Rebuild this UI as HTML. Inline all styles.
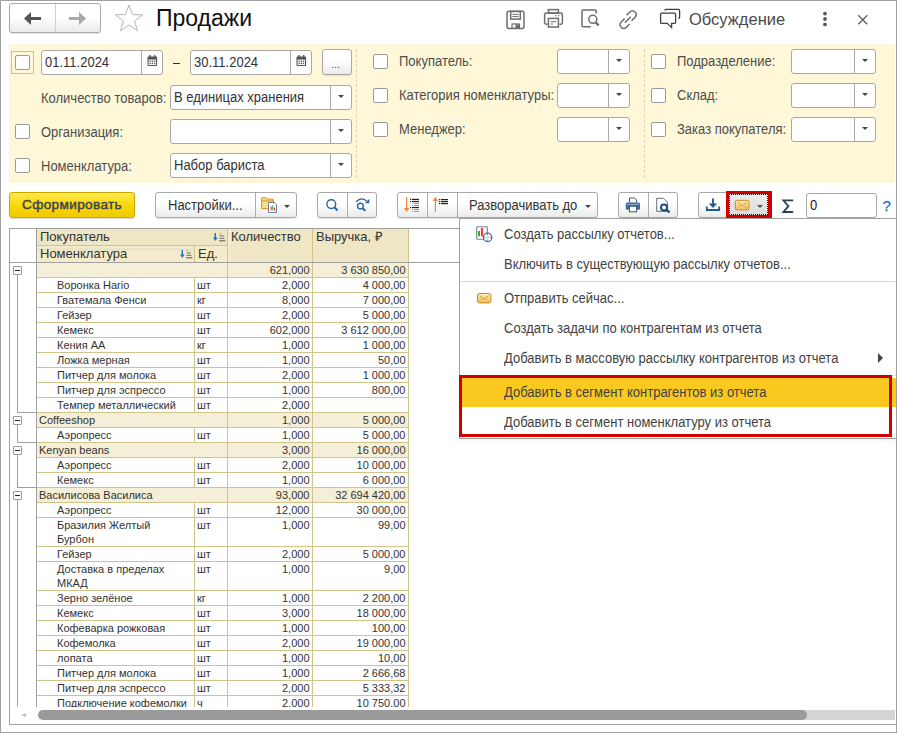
<!DOCTYPE html>
<html><head><meta charset="utf-8">
<style>
*{box-sizing:border-box}
html,body{margin:0;padding:0}
body{width:897px;height:733px;overflow:hidden;position:relative;background:#fff;font-family:"Liberation Sans",sans-serif;color:#333}
.a{position:absolute}
.frame{left:0;top:0;width:897px;height:733px;border:1px solid #a0a0a0}
.t13{font-size:13px;line-height:15px;white-space:nowrap;transform:scaleY(1.07);transform-origin:0 12px}
.t11{font-size:11px;line-height:13px;white-space:nowrap}
.btn{border:1px solid #a9a9a9;border-radius:3px;background:linear-gradient(#fff 0%,#fff 45%,#ebebeb 100%);box-shadow:0 1px 1px rgba(0,0,0,.10)}
.inp{border:1px solid #a8a8a8;border-radius:3px;background:#fff}
.dv{width:1px;background:#c8c8c8}
.cb{width:15px;height:15px;border:1px solid #9a9a9a;border-radius:2px;background:#fff}
.dd{width:0;height:0;border-left:3px solid transparent;border-right:3px solid transparent;border-top:3px solid #444}
.lbl{color:#4d4d4d}
</style></head><body>

<!-- HEADER -->
<div class="a btn" style="left:9px;top:3px;width:92px;height:30px;"></div>
<div class="a" style="left:55px;top:4px;width:1px;height:28px;background:#d0d0d0"></div>
<svg class="a" style="left:20px;top:8px" width="26" height="20" viewBox="0 0 26 20">
  <path d="M4 10.5 L11 4 L11 17 Z" fill="#555"/><rect x="10" y="9" width="11" height="3" fill="#555"/>
</svg>
<svg class="a" style="left:65px;top:8px" width="26" height="20" viewBox="0 0 26 20">
  <path d="M21 10.5 L14 4 L14 17 Z" fill="#a8a8a8"/><rect x="4" y="9" width="11" height="3" fill="#a8a8a8"/>
</svg>
<svg class="a" style="left:113px;top:3px" width="32" height="30" viewBox="0 0 32 30">
  <path d="M16 2 L19.6 11.6 L29.6 11.8 L21.6 18 L24.5 27.8 L16 22 L7.5 27.8 L10.4 18 L2.4 11.8 L12.4 11.6 Z" fill="none" stroke="#b3b7bb" stroke-width="1"/>
</svg>
<div class="a" style="left:156px;top:5px;font-size:23px;line-height:26px;color:#111;white-space:nowrap">Продажи</div>
<!-- header icons -->
<svg class="a" style="left:500px;top:4px" width="200" height="30" viewBox="500 4 200 30" fill="none" stroke="#6e6e6e" stroke-width="1.5">
  <!-- save -->
  <path d="M507 13 Q507 11.2 508.8 11.2 L522 11.2 Q524 11.2 524 13.2 L524 26.6 Q524 28.4 522.2 28.4 L508.8 28.4 Q507 28.4 507 26.6 Z"/>
  <rect x="510.7" y="11.5" width="9.6" height="7.6"/>
  <path d="M512.3 14.4 H518.5 M512.3 16.6 H518.5" stroke-width="1"/>
  <rect x="512" y="24" width="7.5" height="4.4" stroke-width="1.2"/>
  <rect x="515.5" y="24.4" width="4" height="4" fill="#6e6e6e" stroke="none"/>
  <!-- print -->
  <rect x="548.4" y="9.6" width="10" height="3.6"/>
  <path d="M547.5 24.2 H546.2 Q544.6 24.2 544.6 22.6 V14.6 Q544.6 13 546.2 13 H560.8 Q562.4 13 562.4 14.6 V22.6 Q562.4 24.2 560.8 24.2 H559.5"/>
  <rect x="548.4" y="18.4" width="10" height="8.6"/>
  <path d="M555 15.8 H556.6 M558 15.8 H559.6" stroke-width="1.1"/>
  <path d="M550.6 21.7 H556.4 M550.6 24 H553" stroke-width="1"/>
  <!-- preview -->
  <path d="M596.2 13.6 V10.8 Q596.2 10 595.4 10 H583 Q582 10 582 11 V25.8 Q582 26.8 583 26.8 H590.8"/>
  <circle cx="592.8" cy="19.3" r="4"/>
  <path d="M595.6 22.2 L598.6 25.4" stroke-width="2.4"/>
  <!-- link -->
  <path d="M624.6 18.6 L621.2 22 Q618.6 24.6 621.2 27.2 Q623.8 29.8 626.4 27.2 L629.6 24"/>
  <path d="M626.6 15.2 L629.8 12 Q632.4 9.4 635 12 Q637.6 14.6 635 17.2 L631.6 20.6"/>
  <path d="M624.8 22.8 L630.8 16.8"/>
</svg>
<svg class="a" style="left:654px;top:4px" width="36" height="30" viewBox="654 4 36 30" fill="none" stroke="#3f3f3f" stroke-width="1.3">
  <path d="M664.6 10.5 Q665.4 9.3 666.6 9.3 H678.2 Q679.6 9.3 679.6 10.7 V17 Q679.6 18.3 678.4 18.5"/>
  <path d="M661.8 13.2 H674.4 Q675.6 13.2 675.6 14.4 V22.2 Q675.6 23.4 674.4 23.4 H671.6 V27.6 L667.2 23.4 H661.8 Q660.6 23.4 660.6 22.2 V14.4 Q660.6 13.2 661.8 13.2 Z"/>
</svg>
<div class="a" style="left:689px;top:10px;font-size:16.5px;line-height:18px;color:#4a4a4a;white-space:nowrap">Обсуждение</div>
<svg class="a" style="left:818px;top:8px" width="14" height="22" viewBox="818 8 14 22" fill="#5a5a5a">
  <circle cx="825" cy="13.6" r="1.9"/><circle cx="825" cy="19" r="1.9"/><circle cx="825" cy="24.4" r="1.9"/>
</svg>
<svg class="a" style="left:854px;top:11px" width="18" height="18" viewBox="854 11 18 18" stroke="#5a5a5a" stroke-width="1.25">
  <path d="M858.3 15.3 L867.3 24.3 M867.3 15.3 L858.3 24.3"/>
</svg>

<div class="a" style="left:9px;top:44px;width:886px;height:139px;background:#fef8d9"></div>
<div class="a" style="left:11px;top:51px;width:23px;height:23px;border:1px solid #f2c230"></div><div class="a cb" style="left:15px;top:55px"></div>
<div class="a inp" style="left:41px;top:50px;width:122px;height:25px"></div><div class="a" style="left:141px;top:51px;width:1px;height:23px;background:#a8a8a8"></div><svg class="a" style="left:147px;top:55px" width="11" height="12" viewBox="0 0 11 12">
<rect x="0.5" y="1.5" width="9.6" height="9.6" rx="1" fill="#555"/><rect x="1.6" y="4.6" width="7.4" height="5.4" fill="#fff"/>
<rect x="2.3" y="0" width="1.4" height="2.4" fill="#555"/><rect x="7" y="0" width="1.4" height="2.4" fill="#555"/>
<g fill="#555"><rect x="2.5" y="5.6" width="1.3" height="1.3"/><rect x="4.7" y="5.6" width="1.3" height="1.3"/><rect x="6.9" y="5.6" width="1.3" height="1.3"/>
<rect x="2.5" y="7.8" width="1.3" height="1.3"/><rect x="4.7" y="7.8" width="1.3" height="1.3"/><rect x="6.9" y="7.8" width="1.3" height="1.3"/></g></svg><div class="a t13" style="left:45px;top:54.5px;color:#333">01.11.2024</div>
<div class="a" style="left:173px;top:63px;width:7px;height:1.3px;background:#333"></div>
<div class="a inp" style="left:190px;top:50px;width:122px;height:25px"></div><div class="a" style="left:290px;top:51px;width:1px;height:23px;background:#a8a8a8"></div><svg class="a" style="left:296px;top:55px" width="11" height="12" viewBox="0 0 11 12">
<rect x="0.5" y="1.5" width="9.6" height="9.6" rx="1" fill="#555"/><rect x="1.6" y="4.6" width="7.4" height="5.4" fill="#fff"/>
<rect x="2.3" y="0" width="1.4" height="2.4" fill="#555"/><rect x="7" y="0" width="1.4" height="2.4" fill="#555"/>
<g fill="#555"><rect x="2.5" y="5.6" width="1.3" height="1.3"/><rect x="4.7" y="5.6" width="1.3" height="1.3"/><rect x="6.9" y="5.6" width="1.3" height="1.3"/>
<rect x="2.5" y="7.8" width="1.3" height="1.3"/><rect x="4.7" y="7.8" width="1.3" height="1.3"/><rect x="6.9" y="7.8" width="1.3" height="1.3"/></g></svg><div class="a t13" style="left:194px;top:54.5px;color:#333">30.11.2024</div>
<div class="a btn" style="left:322px;top:49px;width:30px;height:26px"></div>
<div class="a" style="left:331px;top:58px;font-size:11px;line-height:13px;color:#555">...</div>
<div class="a" style="left:356px;top:49px;width:0;height:129px;border-left:1px dashed #d9d2b4"></div>
<div class="a" style="left:644px;top:49px;width:0;height:129px;border-left:1px dashed #d9d2b4"></div>
<div class="a t13 lbl" style="left:41px;top:90.6px">Количество товаров:</div>
<div class="a inp" style="left:170px;top:85px;width:182px;height:25px"></div><div class="a" style="left:330px;top:86px;width:1px;height:23px;background:#a8a8a8"></div><div class="a dd" style="left:338.0px;top:95px"></div><div class="a t13" style="left:174px;top:89.5px;color:#333">В единицах хранения</div>
<div class="a cb" style="left:15px;top:124px"></div>
<div class="a t13 lbl" style="left:41px;top:124.6px">Организация:</div>
<div class="a inp" style="left:170px;top:119px;width:182px;height:25px"></div><div class="a" style="left:330px;top:120px;width:1px;height:23px;background:#a8a8a8"></div><div class="a dd" style="left:338.0px;top:129px"></div>
<div class="a cb" style="left:15px;top:158px"></div>
<div class="a t13 lbl" style="left:41px;top:158.6px">Номенклатура:</div>
<div class="a inp" style="left:170px;top:153px;width:182px;height:25px"></div><div class="a" style="left:330px;top:154px;width:1px;height:23px;background:#a8a8a8"></div><div class="a dd" style="left:338.0px;top:163px"></div><div class="a t13" style="left:174px;top:157.5px;color:#333">Набор бариста</div>
<div class="a cb" style="left:373px;top:54px"></div>
<div class="a t13 lbl" style="left:399px;top:53.6px">Покупатель:</div>
<div class="a inp" style="left:557px;top:49px;width:73px;height:25px"></div><div class="a" style="left:608px;top:50px;width:1px;height:23px;background:#a8a8a8"></div><div class="a dd" style="left:616.0px;top:59px"></div>
<div class="a cb" style="left:373px;top:88px"></div>
<div class="a t13 lbl" style="left:399px;top:87.6px">Категория номенклатуры:</div>
<div class="a inp" style="left:557px;top:83px;width:73px;height:25px"></div><div class="a" style="left:608px;top:84px;width:1px;height:23px;background:#a8a8a8"></div><div class="a dd" style="left:616.0px;top:93px"></div>
<div class="a cb" style="left:373px;top:122px"></div>
<div class="a t13 lbl" style="left:399px;top:121.6px">Менеджер:</div>
<div class="a inp" style="left:557px;top:117px;width:73px;height:25px"></div><div class="a" style="left:608px;top:118px;width:1px;height:23px;background:#a8a8a8"></div><div class="a dd" style="left:616.0px;top:127px"></div>
<div class="a cb" style="left:651px;top:54px"></div>
<div class="a t13 lbl" style="left:677px;top:53.6px">Подразделение:</div>
<div class="a inp" style="left:791px;top:49px;width:85px;height:25px"></div><div class="a" style="left:854px;top:50px;width:1px;height:23px;background:#a8a8a8"></div><div class="a dd" style="left:862.0px;top:59px"></div>
<div class="a cb" style="left:651px;top:88px"></div>
<div class="a t13 lbl" style="left:677px;top:87.6px">Склад:</div>
<div class="a inp" style="left:791px;top:83px;width:85px;height:25px"></div><div class="a" style="left:854px;top:84px;width:1px;height:23px;background:#a8a8a8"></div><div class="a dd" style="left:862.0px;top:93px"></div>
<div class="a cb" style="left:651px;top:122px"></div>
<div class="a t13 lbl" style="left:677px;top:121.6px">Заказ покупателя:</div>
<div class="a inp" style="left:791px;top:117px;width:85px;height:25px"></div><div class="a" style="left:854px;top:118px;width:1px;height:23px;background:#a8a8a8"></div><div class="a dd" style="left:862.0px;top:127px"></div><div class="a" style="left:9px;top:192px;width:126px;height:26px;border:1px solid #c9a900;border-radius:3px;background:linear-gradient(#ffe94a,#f7d500 60%,#efc900);box-shadow:0 1px 1px rgba(0,0,0,.15)"></div>
<div class="a" style="left:22px;top:197.3px;font-size:13.6px;letter-spacing:0.35px;line-height:15px;-webkit-text-stroke:0.45px #3d4350;color:#3d4350;white-space:nowrap">Сформировать</div>
<div class="a btn" style="left:155px;top:192px;width:142px;height:26px;"></div>
<div class="a" style="left:255px;top:193px;width:1px;height:24px;background:#acacac"></div>
<div class="a t13" style="left:168px;top:198px;color:#333">Настройки...</div>
<svg class="a" style="left:258px;top:194px" width="24" height="22" viewBox="258 194 24 22">
<path d="M261.5 199.5 V198.2 Q261.5 197.5 262.2 197.5 H265.6 L267 199 H272.6 Q273.4 199 273.4 199.8 V208.6 H261.5 Z" fill="#f3d27a" stroke="#d49a2a" stroke-width="1"/>
<path d="M261.5 201 H273.4 V208.6 H261.5 Z" fill="#f8dc8c" stroke="#d49a2a" stroke-width="1"/>
<path d="M268.5 202.5 H274.5 L276.5 204.5 V212.5 H268.5 Z" fill="#fff" stroke="#6b7f93" stroke-width="1"/>
<rect x="270.6" y="206.5" width="1" height="4" fill="#e23"/><rect x="272.3" y="205.5" width="1" height="5" fill="#2a2"/><rect x="274" y="207.5" width="1" height="3" fill="#e23"/>
</svg>
<div class="a dd" style="left:284px;top:205px"></div>
<div class="a btn" style="left:317px;top:192px;width:60px;height:26px;"></div>
<div class="a" style="left:347px;top:193px;width:1px;height:24px;background:#acacac"></div>
<svg class="a" style="left:320px;top:194px" width="54" height="22" viewBox="320 194 54 22" fill="none" stroke="#2766a0" stroke-width="1.6">
<circle cx="331.3" cy="204.1" r="4.4" stroke-width="1.4"/><path d="M334.4 207.2 L337.6 210.4" stroke-width="2.1"/>
<circle cx="360.4" cy="206.1" r="2.9" stroke-width="1.35"/><path d="M362.6 208.2 L365.4 210.8" stroke-width="1.9"/>
<path d="M356.3 201.8 Q361.2 196.4 366.6 201" stroke-width="1.35"/><path d="M364.8 203.2 L369.3 198.8 L369.3 203.2 Z" fill="#2766a0" stroke="none"/>
</svg>
<div class="a btn" style="left:397px;top:192px;width:201px;height:26px;"></div>
<div class="a" style="left:427px;top:193px;width:1px;height:24px;background:#acacac"></div>
<div class="a" style="left:457px;top:193px;width:1px;height:24px;background:#acacac"></div>
<svg class="a" style="left:400px;top:194px" width="54" height="22" viewBox="400 194 54 22">
<rect x="406" y="197" width="1.2" height="12" fill="#f08a3c"/><path d="M403.8 208 H409.4 L406.6 212 Z" fill="#f08a3c"/>
<g fill="#222"><rect x="410" y="198.8" width="1.2" height="1.2"/><rect x="410" y="200.9" width="1.2" height="1.2"/><rect x="410" y="206.9" width="1.2" height="1.2"/>
<rect x="412" y="198.8" width="7" height="1.2"/><rect x="412" y="200.9" width="7" height="1.2"/><rect x="412" y="206.9" width="7" height="1.2"/></g>
<g fill="#8a8a8a"><rect x="412.2" y="202.9" width="0.9" height="0.9"/><rect x="412.2" y="204.9" width="0.9" height="0.9"/><rect x="412.2" y="208.9" width="0.9" height="0.9"/><rect x="412.2" y="210.9" width="0.9" height="0.9"/>
<rect x="414" y="202.9" width="5" height="0.9"/><rect x="414" y="204.9" width="5" height="0.9"/><rect x="414" y="208.9" width="5" height="0.9"/><rect x="414" y="210.9" width="5" height="0.9"/></g>
<rect x="434.8" y="200" width="1.2" height="12" fill="#f08a3c"/><path d="M432.6 201 H438.2 L435.4 197 Z" fill="#f08a3c"/>
<g fill="#222"><rect x="439" y="199" width="1.2" height="1.2"/><rect x="439" y="201" width="1.2" height="1.2"/><rect x="439" y="203" width="1.2" height="1.2"/>
<rect x="441" y="199" width="7" height="1.2"/><rect x="441" y="201" width="7" height="1.2"/><rect x="441" y="203" width="7" height="1.2"/></g>
</svg>
<div class="a t13" style="left:469px;top:198px;color:#333">Разворачивать до</div>
<div class="a dd" style="left:585px;top:205px"></div>
<div class="a btn" style="left:618px;top:192px;width:60px;height:26px;"></div>
<div class="a" style="left:648px;top:193px;width:1px;height:24px;background:#acacac"></div>
<svg class="a" style="left:620px;top:194px" width="56" height="22" viewBox="620 194 56 22">
<path d="M629.5 202.5 V198 H634.5 L636.5 200 V202.5" fill="#fff" stroke="#3b5573" stroke-width="1"/>
<rect x="625.8" y="202.6" width="14.2" height="7.2" rx="1.5" fill="#3f6c9b"/>
<rect x="627" y="204" width="11.8" height="1" fill="#8fb0d0"/>
<rect x="629.4" y="206.2" width="7.2" height="5.6" fill="#fff" stroke="#3b5573" stroke-width="1"/>
<path d="M656.7 198.3 H663.5 L667.5 202.3 V211.3 H656.7 Z" fill="#fff" stroke="#5b6f85" stroke-width="1"/>
<circle cx="664" cy="207.4" r="3" fill="none" stroke="#1d4f80" stroke-width="2"/><path d="M666.2 209.6 L669.6 212.4" stroke="#1d4f80" stroke-width="2.3"/>
</svg>
<div class="a btn" style="left:698px;top:192px;width:40px;height:26px;"></div>
<svg class="a" style="left:702px;top:194px" width="22" height="20" viewBox="702 194 22 20" fill="none" stroke="#1f5b93">
<path d="M706.8 206.5 V210 H719.2 V206.5" stroke-width="1.8"/>
<path d="M713 198.6 V205" stroke-width="1.9"/><path d="M708.8 203.6 H717.2 L713 208 Z" fill="#1f5b93" stroke="none"/>
</svg>
<div class="a" style="left:726px;top:191px;width:46px;height:27px;background:#d00000"></div>
<div class="a" style="left:729px;top:194px;width:39px;height:21px;background:linear-gradient(#ececec,#dcdcdc);border:1px dotted #111"></div>
<svg class="a" style="left:733px;top:198px" width="18" height="14" viewBox="733 198 18 14">
<defs><linearGradient id="eg2" x1="0" y1="0" x2="0" y2="1"><stop offset="0" stop-color="#fdeeb4"/><stop offset="1" stop-color="#eec05a"/></linearGradient></defs>
<rect x="735.3" y="200.3" width="13.6" height="9.6" rx="1.6" fill="url(#eg2)" stroke="#c98a2a" stroke-width="1"/>
<path d="M737.4 202.2 L742.1 206 L746.8 202.2" fill="none" stroke="#cf9a3e" stroke-width="1"/>
<path d="M736.4 209 L740.4 205.2 M747.8 209 L743.8 205.2" fill="none" stroke="#d9a650" stroke-width="0.8"/>
</svg>
<div class="a dd" style="left:757px;top:205px;border-top-color:#555"></div>
<svg class="a" style="left:780px;top:197px" width="16" height="18" viewBox="780 197 16 18">
<path d="M792.3 201.2 V200.4 H783.4 L788.4 206.2 L783.4 212 H792.3 V211.2" fill="none" stroke="#2b4058" stroke-width="1.8" stroke-linejoin="miter"/>
</svg>
<div class="a inp" style="left:806px;top:193px;width:71px;height:25px"></div>
<div class="a t13" style="left:810px;top:198px;color:#222">0</div>
<div class="a" style="left:882.5px;top:196.5px;font-size:15px;line-height:17px;-webkit-text-stroke:0.35px #1f78cc;color:#1f78cc">?</div><div class="a" style="left:9px;top:228px;width:887px;height:497px;border:1px solid #a0a0a0;border-right:none"></div>
<div class="a" style="left:37px;top:229px;width:371px;height:33px;background:#eee6c4"></div>
<div class="a" style="left:10px;top:262px;width:886px;height:1px;background:#a0a0a0"></div>
<div class="a" style="left:36px;top:229px;width:1px;height:478px;background:#a0a0a0"></div>
<div class="a" style="left:37px;top:245px;width:190px;height:1px;background:#d0c48b"></div>
<div class="a" style="left:37px;top:246px;width:190px;height:16px;background:#f3ebc9"></div><div class="a" style="left:37px;top:248px;width:157px;height:3px;background:#e9e3c9"></div>
<div class="a" style="left:194px;top:246px;width:1px;height:16px;background:#d0c48b"></div>
<div class="a" style="left:227px;top:229px;width:1px;height:33px;background:#d0c48b"></div>
<div class="a" style="left:228px;top:229px;width:3px;height:33px;background:#f4ecd0"></div>
<div class="a" style="left:312px;top:229px;width:1px;height:33px;background:#d0c48b"></div>
<div class="a" style="left:408px;top:229px;width:1px;height:33px;background:#d0c48b"></div>
<div class="a" style="left:40px;top:229px;font-size:13px;line-height:15px;color:#333;white-space:nowrap">Покупатель</div>
<div class="a" style="left:40px;top:246px;font-size:13px;line-height:15px;color:#333;white-space:nowrap">Номенклатура</div>
<div class="a" style="left:198px;top:246px;font-size:13px;line-height:15px;color:#333;white-space:nowrap">Ед.</div>
<div class="a" style="left:231px;top:229px;font-size:13px;line-height:15px;color:#333;white-space:nowrap">Количество</div>
<div class="a" style="left:316px;top:229px;font-size:13px;line-height:15px;color:#333;white-space:nowrap">Выручка, ₽</div>
<svg class="a" style="left:213px;top:233px" width="14" height="9" viewBox="0 0 14 9">
<rect x="1.6" y="0" width="1.4" height="5.5" fill="#1f6fc0"/><path d="M0 4.6 H4.6 L2.3 8 Z" fill="#1f6fc0"/>
<g fill="#6a6a6a"><rect x="6.8" y="0" width="1" height="1"/><rect x="6.6" y="2.4" width="4.2" height="1"/><rect x="6.4" y="4.8" width="5" height="1"/><rect x="6.2" y="7.2" width="6.2" height="1.2"/></g></svg>
<svg class="a" style="left:180px;top:250px" width="14" height="9" viewBox="0 0 14 9">
<rect x="1.6" y="0" width="1.4" height="5.5" fill="#1f6fc0"/><path d="M0 4.6 H4.6 L2.3 8 Z" fill="#1f6fc0"/>
<g fill="#6a6a6a"><rect x="6.8" y="0" width="1" height="1"/><rect x="6.6" y="2.4" width="4.2" height="1"/><rect x="6.4" y="4.8" width="5" height="1"/><rect x="6.2" y="7.2" width="6.2" height="1.2"/></g></svg>
<div class="a" style="left:37px;top:263px;width:380px;height:444px;overflow:hidden"><div class="a" style="left:0;top:0px;width:371px;height:14px;background:#f6efd8"></div><div class="a t11" style="left:2px;top:0px;line-height:14px;color:#333"></div><div class="a t11" style="left:191px;top:0px;width:81.5px;text-align:right;line-height:14px;color:#333">621,000</div><div class="a t11" style="left:275px;top:0px;width:93.5px;text-align:right;line-height:14px;color:#333">3 630 850,00</div><div class="a" style="left:190px;top:0px;width:1px;height:14px;background:#d0c48b"></div><div class="a" style="left:275px;top:0px;width:1px;height:14px;background:#d0c48b"></div><div class="a" style="left:371px;top:0px;width:1px;height:15px;background:#d0c48b"></div><div class="a" style="left:0;top:14px;width:372px;height:1px;background:#d0c48b"></div><div class="a t11" style="left:20px;top:15px;line-height:14px;color:#333">Воронка Hario</div><div class="a t11" style="left:160px;top:15px;line-height:14px;color:#333">шт</div><div class="a" style="left:157px;top:15px;width:1px;height:14px;background:#d0c48b"></div><div class="a t11" style="left:191px;top:15px;width:81.5px;text-align:right;line-height:14px;color:#333">2,000</div><div class="a t11" style="left:275px;top:15px;width:93.5px;text-align:right;line-height:14px;color:#333">4 000,00</div><div class="a" style="left:190px;top:15px;width:1px;height:14px;background:#d0c48b"></div><div class="a" style="left:275px;top:15px;width:1px;height:14px;background:#d0c48b"></div><div class="a" style="left:371px;top:15px;width:1px;height:15px;background:#d0c48b"></div><div class="a" style="left:0;top:29px;width:372px;height:1px;background:#d0c48b"></div><div class="a t11" style="left:20px;top:30px;line-height:14px;color:#333">Гватемала Фенси</div><div class="a t11" style="left:160px;top:30px;line-height:14px;color:#333">кг</div><div class="a" style="left:157px;top:30px;width:1px;height:14px;background:#d0c48b"></div><div class="a t11" style="left:191px;top:30px;width:81.5px;text-align:right;line-height:14px;color:#333">8,000</div><div class="a t11" style="left:275px;top:30px;width:93.5px;text-align:right;line-height:14px;color:#333">7 000,00</div><div class="a" style="left:190px;top:30px;width:1px;height:14px;background:#d0c48b"></div><div class="a" style="left:275px;top:30px;width:1px;height:14px;background:#d0c48b"></div><div class="a" style="left:371px;top:30px;width:1px;height:15px;background:#d0c48b"></div><div class="a" style="left:0;top:44px;width:372px;height:1px;background:#d0c48b"></div><div class="a t11" style="left:20px;top:45px;line-height:14px;color:#333">Гейзер</div><div class="a t11" style="left:160px;top:45px;line-height:14px;color:#333">шт</div><div class="a" style="left:157px;top:45px;width:1px;height:14px;background:#d0c48b"></div><div class="a t11" style="left:191px;top:45px;width:81.5px;text-align:right;line-height:14px;color:#333">2,000</div><div class="a t11" style="left:275px;top:45px;width:93.5px;text-align:right;line-height:14px;color:#333">5 000,00</div><div class="a" style="left:190px;top:45px;width:1px;height:14px;background:#d0c48b"></div><div class="a" style="left:275px;top:45px;width:1px;height:14px;background:#d0c48b"></div><div class="a" style="left:371px;top:45px;width:1px;height:15px;background:#d0c48b"></div><div class="a" style="left:0;top:59px;width:372px;height:1px;background:#d0c48b"></div><div class="a t11" style="left:20px;top:60px;line-height:14px;color:#333">Кемекс</div><div class="a t11" style="left:160px;top:60px;line-height:14px;color:#333">шт</div><div class="a" style="left:157px;top:60px;width:1px;height:14px;background:#d0c48b"></div><div class="a t11" style="left:191px;top:60px;width:81.5px;text-align:right;line-height:14px;color:#333">602,000</div><div class="a t11" style="left:275px;top:60px;width:93.5px;text-align:right;line-height:14px;color:#333">3 612 000,00</div><div class="a" style="left:190px;top:60px;width:1px;height:14px;background:#d0c48b"></div><div class="a" style="left:275px;top:60px;width:1px;height:14px;background:#d0c48b"></div><div class="a" style="left:371px;top:60px;width:1px;height:15px;background:#d0c48b"></div><div class="a" style="left:0;top:74px;width:372px;height:1px;background:#d0c48b"></div><div class="a t11" style="left:20px;top:75px;line-height:14px;color:#333">Кения АА</div><div class="a t11" style="left:160px;top:75px;line-height:14px;color:#333">кг</div><div class="a" style="left:157px;top:75px;width:1px;height:14px;background:#d0c48b"></div><div class="a t11" style="left:191px;top:75px;width:81.5px;text-align:right;line-height:14px;color:#333">1,000</div><div class="a t11" style="left:275px;top:75px;width:93.5px;text-align:right;line-height:14px;color:#333">1 000,00</div><div class="a" style="left:190px;top:75px;width:1px;height:14px;background:#d0c48b"></div><div class="a" style="left:275px;top:75px;width:1px;height:14px;background:#d0c48b"></div><div class="a" style="left:371px;top:75px;width:1px;height:15px;background:#d0c48b"></div><div class="a" style="left:0;top:89px;width:372px;height:1px;background:#d0c48b"></div><div class="a t11" style="left:20px;top:90px;line-height:14px;color:#333">Ложка мерная</div><div class="a t11" style="left:160px;top:90px;line-height:14px;color:#333">шт</div><div class="a" style="left:157px;top:90px;width:1px;height:14px;background:#d0c48b"></div><div class="a t11" style="left:191px;top:90px;width:81.5px;text-align:right;line-height:14px;color:#333">1,000</div><div class="a t11" style="left:275px;top:90px;width:93.5px;text-align:right;line-height:14px;color:#333">50,00</div><div class="a" style="left:190px;top:90px;width:1px;height:14px;background:#d0c48b"></div><div class="a" style="left:275px;top:90px;width:1px;height:14px;background:#d0c48b"></div><div class="a" style="left:371px;top:90px;width:1px;height:15px;background:#d0c48b"></div><div class="a" style="left:0;top:104px;width:372px;height:1px;background:#d0c48b"></div><div class="a t11" style="left:20px;top:105px;line-height:14px;color:#333">Питчер для молока</div><div class="a t11" style="left:160px;top:105px;line-height:14px;color:#333">шт</div><div class="a" style="left:157px;top:105px;width:1px;height:14px;background:#d0c48b"></div><div class="a t11" style="left:191px;top:105px;width:81.5px;text-align:right;line-height:14px;color:#333">2,000</div><div class="a t11" style="left:275px;top:105px;width:93.5px;text-align:right;line-height:14px;color:#333">1 000,00</div><div class="a" style="left:190px;top:105px;width:1px;height:14px;background:#d0c48b"></div><div class="a" style="left:275px;top:105px;width:1px;height:14px;background:#d0c48b"></div><div class="a" style="left:371px;top:105px;width:1px;height:15px;background:#d0c48b"></div><div class="a" style="left:0;top:119px;width:372px;height:1px;background:#d0c48b"></div><div class="a t11" style="left:20px;top:120px;line-height:14px;color:#333">Питчер для эспрессо</div><div class="a t11" style="left:160px;top:120px;line-height:14px;color:#333">шт</div><div class="a" style="left:157px;top:120px;width:1px;height:14px;background:#d0c48b"></div><div class="a t11" style="left:191px;top:120px;width:81.5px;text-align:right;line-height:14px;color:#333">1,000</div><div class="a t11" style="left:275px;top:120px;width:93.5px;text-align:right;line-height:14px;color:#333">800,00</div><div class="a" style="left:190px;top:120px;width:1px;height:14px;background:#d0c48b"></div><div class="a" style="left:275px;top:120px;width:1px;height:14px;background:#d0c48b"></div><div class="a" style="left:371px;top:120px;width:1px;height:15px;background:#d0c48b"></div><div class="a" style="left:0;top:134px;width:372px;height:1px;background:#d0c48b"></div><div class="a t11" style="left:20px;top:135px;line-height:14px;color:#333">Темпер металлический</div><div class="a t11" style="left:160px;top:135px;line-height:14px;color:#333">шт</div><div class="a" style="left:157px;top:135px;width:1px;height:14px;background:#d0c48b"></div><div class="a t11" style="left:191px;top:135px;width:81.5px;text-align:right;line-height:14px;color:#333">2,000</div><div class="a t11" style="left:275px;top:135px;width:93.5px;text-align:right;line-height:14px;color:#333"></div><div class="a" style="left:190px;top:135px;width:1px;height:14px;background:#d0c48b"></div><div class="a" style="left:275px;top:135px;width:1px;height:14px;background:#d0c48b"></div><div class="a" style="left:371px;top:135px;width:1px;height:15px;background:#d0c48b"></div><div class="a" style="left:0;top:149px;width:372px;height:1px;background:#d0c48b"></div><div class="a" style="left:0;top:150px;width:371px;height:14px;background:#f6efd8"></div><div class="a t11" style="left:2px;top:150px;line-height:14px;color:#333">Coffeeshop</div><div class="a t11" style="left:191px;top:150px;width:81.5px;text-align:right;line-height:14px;color:#333">1,000</div><div class="a t11" style="left:275px;top:150px;width:93.5px;text-align:right;line-height:14px;color:#333">5 000,00</div><div class="a" style="left:190px;top:150px;width:1px;height:14px;background:#d0c48b"></div><div class="a" style="left:275px;top:150px;width:1px;height:14px;background:#d0c48b"></div><div class="a" style="left:371px;top:150px;width:1px;height:15px;background:#d0c48b"></div><div class="a" style="left:0;top:164px;width:372px;height:1px;background:#d0c48b"></div><div class="a t11" style="left:20px;top:165px;line-height:14px;color:#333">Аэропресс</div><div class="a t11" style="left:160px;top:165px;line-height:14px;color:#333">шт</div><div class="a" style="left:157px;top:165px;width:1px;height:14px;background:#d0c48b"></div><div class="a t11" style="left:191px;top:165px;width:81.5px;text-align:right;line-height:14px;color:#333">1,000</div><div class="a t11" style="left:275px;top:165px;width:93.5px;text-align:right;line-height:14px;color:#333">5 000,00</div><div class="a" style="left:190px;top:165px;width:1px;height:14px;background:#d0c48b"></div><div class="a" style="left:275px;top:165px;width:1px;height:14px;background:#d0c48b"></div><div class="a" style="left:371px;top:165px;width:1px;height:15px;background:#d0c48b"></div><div class="a" style="left:0;top:179px;width:372px;height:1px;background:#d0c48b"></div><div class="a" style="left:0;top:180px;width:371px;height:14px;background:#f6efd8"></div><div class="a t11" style="left:2px;top:180px;line-height:14px;color:#333">Kenyan beans</div><div class="a t11" style="left:191px;top:180px;width:81.5px;text-align:right;line-height:14px;color:#333">3,000</div><div class="a t11" style="left:275px;top:180px;width:93.5px;text-align:right;line-height:14px;color:#333">16 000,00</div><div class="a" style="left:190px;top:180px;width:1px;height:14px;background:#d0c48b"></div><div class="a" style="left:275px;top:180px;width:1px;height:14px;background:#d0c48b"></div><div class="a" style="left:371px;top:180px;width:1px;height:15px;background:#d0c48b"></div><div class="a" style="left:0;top:194px;width:372px;height:1px;background:#d0c48b"></div><div class="a t11" style="left:20px;top:195px;line-height:14px;color:#333">Аэропресс</div><div class="a t11" style="left:160px;top:195px;line-height:14px;color:#333">шт</div><div class="a" style="left:157px;top:195px;width:1px;height:14px;background:#d0c48b"></div><div class="a t11" style="left:191px;top:195px;width:81.5px;text-align:right;line-height:14px;color:#333">2,000</div><div class="a t11" style="left:275px;top:195px;width:93.5px;text-align:right;line-height:14px;color:#333">10 000,00</div><div class="a" style="left:190px;top:195px;width:1px;height:14px;background:#d0c48b"></div><div class="a" style="left:275px;top:195px;width:1px;height:14px;background:#d0c48b"></div><div class="a" style="left:371px;top:195px;width:1px;height:15px;background:#d0c48b"></div><div class="a" style="left:0;top:209px;width:372px;height:1px;background:#d0c48b"></div><div class="a t11" style="left:20px;top:210px;line-height:14px;color:#333">Кемекс</div><div class="a t11" style="left:160px;top:210px;line-height:14px;color:#333">шт</div><div class="a" style="left:157px;top:210px;width:1px;height:14px;background:#d0c48b"></div><div class="a t11" style="left:191px;top:210px;width:81.5px;text-align:right;line-height:14px;color:#333">1,000</div><div class="a t11" style="left:275px;top:210px;width:93.5px;text-align:right;line-height:14px;color:#333">6 000,00</div><div class="a" style="left:190px;top:210px;width:1px;height:14px;background:#d0c48b"></div><div class="a" style="left:275px;top:210px;width:1px;height:14px;background:#d0c48b"></div><div class="a" style="left:371px;top:210px;width:1px;height:15px;background:#d0c48b"></div><div class="a" style="left:0;top:224px;width:372px;height:1px;background:#d0c48b"></div><div class="a" style="left:0;top:225px;width:371px;height:14px;background:#f6efd8"></div><div class="a t11" style="left:2px;top:225px;line-height:14px;color:#333">Василисова Василиса</div><div class="a t11" style="left:191px;top:225px;width:81.5px;text-align:right;line-height:14px;color:#333">93,000</div><div class="a t11" style="left:275px;top:225px;width:93.5px;text-align:right;line-height:14px;color:#333">32 694 420,00</div><div class="a" style="left:190px;top:225px;width:1px;height:14px;background:#d0c48b"></div><div class="a" style="left:275px;top:225px;width:1px;height:14px;background:#d0c48b"></div><div class="a" style="left:371px;top:225px;width:1px;height:15px;background:#d0c48b"></div><div class="a" style="left:0;top:239px;width:372px;height:1px;background:#d0c48b"></div><div class="a t11" style="left:20px;top:240px;line-height:14px;color:#333">Аэропресс</div><div class="a t11" style="left:160px;top:240px;line-height:14px;color:#333">шт</div><div class="a" style="left:157px;top:240px;width:1px;height:14px;background:#d0c48b"></div><div class="a t11" style="left:191px;top:240px;width:81.5px;text-align:right;line-height:14px;color:#333">12,000</div><div class="a t11" style="left:275px;top:240px;width:93.5px;text-align:right;line-height:14px;color:#333">30 000,00</div><div class="a" style="left:190px;top:240px;width:1px;height:14px;background:#d0c48b"></div><div class="a" style="left:275px;top:240px;width:1px;height:14px;background:#d0c48b"></div><div class="a" style="left:371px;top:240px;width:1px;height:15px;background:#d0c48b"></div><div class="a" style="left:0;top:254px;width:372px;height:1px;background:#d0c48b"></div><div class="a t11" style="left:20px;top:255px;line-height:14px;color:#333">Бразилия Желтый<br>Бурбон</div><div class="a t11" style="left:160px;top:255px;line-height:14px;color:#333">шт</div><div class="a" style="left:157px;top:255px;width:1px;height:28px;background:#d0c48b"></div><div class="a t11" style="left:191px;top:255px;width:81.5px;text-align:right;line-height:14px;color:#333">1,000</div><div class="a t11" style="left:275px;top:255px;width:93.5px;text-align:right;line-height:14px;color:#333">99,00</div><div class="a" style="left:190px;top:255px;width:1px;height:28px;background:#d0c48b"></div><div class="a" style="left:275px;top:255px;width:1px;height:28px;background:#d0c48b"></div><div class="a" style="left:371px;top:255px;width:1px;height:29px;background:#d0c48b"></div><div class="a" style="left:0;top:283px;width:372px;height:1px;background:#d0c48b"></div><div class="a t11" style="left:20px;top:284px;line-height:14px;color:#333">Гейзер</div><div class="a t11" style="left:160px;top:284px;line-height:14px;color:#333">шт</div><div class="a" style="left:157px;top:284px;width:1px;height:14px;background:#d0c48b"></div><div class="a t11" style="left:191px;top:284px;width:81.5px;text-align:right;line-height:14px;color:#333">2,000</div><div class="a t11" style="left:275px;top:284px;width:93.5px;text-align:right;line-height:14px;color:#333">5 000,00</div><div class="a" style="left:190px;top:284px;width:1px;height:14px;background:#d0c48b"></div><div class="a" style="left:275px;top:284px;width:1px;height:14px;background:#d0c48b"></div><div class="a" style="left:371px;top:284px;width:1px;height:15px;background:#d0c48b"></div><div class="a" style="left:0;top:298px;width:372px;height:1px;background:#d0c48b"></div><div class="a t11" style="left:20px;top:299px;line-height:14px;color:#333">Доставка в пределах<br>МКАД</div><div class="a t11" style="left:160px;top:299px;line-height:14px;color:#333">шт</div><div class="a" style="left:157px;top:299px;width:1px;height:28px;background:#d0c48b"></div><div class="a t11" style="left:191px;top:299px;width:81.5px;text-align:right;line-height:14px;color:#333">1,000</div><div class="a t11" style="left:275px;top:299px;width:93.5px;text-align:right;line-height:14px;color:#333">9,00</div><div class="a" style="left:190px;top:299px;width:1px;height:28px;background:#d0c48b"></div><div class="a" style="left:275px;top:299px;width:1px;height:28px;background:#d0c48b"></div><div class="a" style="left:371px;top:299px;width:1px;height:29px;background:#d0c48b"></div><div class="a" style="left:0;top:327px;width:372px;height:1px;background:#d0c48b"></div><div class="a t11" style="left:20px;top:328px;line-height:14px;color:#333">Зерно зелёное</div><div class="a t11" style="left:160px;top:328px;line-height:14px;color:#333">кг</div><div class="a" style="left:157px;top:328px;width:1px;height:14px;background:#d0c48b"></div><div class="a t11" style="left:191px;top:328px;width:81.5px;text-align:right;line-height:14px;color:#333">1,000</div><div class="a t11" style="left:275px;top:328px;width:93.5px;text-align:right;line-height:14px;color:#333">2 200,00</div><div class="a" style="left:190px;top:328px;width:1px;height:14px;background:#d0c48b"></div><div class="a" style="left:275px;top:328px;width:1px;height:14px;background:#d0c48b"></div><div class="a" style="left:371px;top:328px;width:1px;height:15px;background:#d0c48b"></div><div class="a" style="left:0;top:342px;width:372px;height:1px;background:#d0c48b"></div><div class="a t11" style="left:20px;top:343px;line-height:14px;color:#333">Кемекс</div><div class="a t11" style="left:160px;top:343px;line-height:14px;color:#333">шт</div><div class="a" style="left:157px;top:343px;width:1px;height:14px;background:#d0c48b"></div><div class="a t11" style="left:191px;top:343px;width:81.5px;text-align:right;line-height:14px;color:#333">3,000</div><div class="a t11" style="left:275px;top:343px;width:93.5px;text-align:right;line-height:14px;color:#333">18 000,00</div><div class="a" style="left:190px;top:343px;width:1px;height:14px;background:#d0c48b"></div><div class="a" style="left:275px;top:343px;width:1px;height:14px;background:#d0c48b"></div><div class="a" style="left:371px;top:343px;width:1px;height:15px;background:#d0c48b"></div><div class="a" style="left:0;top:357px;width:372px;height:1px;background:#d0c48b"></div><div class="a t11" style="left:20px;top:358px;line-height:14px;color:#333">Кофеварка рожковая</div><div class="a t11" style="left:160px;top:358px;line-height:14px;color:#333">шт</div><div class="a" style="left:157px;top:358px;width:1px;height:14px;background:#d0c48b"></div><div class="a t11" style="left:191px;top:358px;width:81.5px;text-align:right;line-height:14px;color:#333">1,000</div><div class="a t11" style="left:275px;top:358px;width:93.5px;text-align:right;line-height:14px;color:#333">100,00</div><div class="a" style="left:190px;top:358px;width:1px;height:14px;background:#d0c48b"></div><div class="a" style="left:275px;top:358px;width:1px;height:14px;background:#d0c48b"></div><div class="a" style="left:371px;top:358px;width:1px;height:15px;background:#d0c48b"></div><div class="a" style="left:0;top:372px;width:372px;height:1px;background:#d0c48b"></div><div class="a t11" style="left:20px;top:373px;line-height:14px;color:#333">Кофемолка</div><div class="a t11" style="left:160px;top:373px;line-height:14px;color:#333">шт</div><div class="a" style="left:157px;top:373px;width:1px;height:14px;background:#d0c48b"></div><div class="a t11" style="left:191px;top:373px;width:81.5px;text-align:right;line-height:14px;color:#333">2,000</div><div class="a t11" style="left:275px;top:373px;width:93.5px;text-align:right;line-height:14px;color:#333">19 000,00</div><div class="a" style="left:190px;top:373px;width:1px;height:14px;background:#d0c48b"></div><div class="a" style="left:275px;top:373px;width:1px;height:14px;background:#d0c48b"></div><div class="a" style="left:371px;top:373px;width:1px;height:15px;background:#d0c48b"></div><div class="a" style="left:0;top:387px;width:372px;height:1px;background:#d0c48b"></div><div class="a t11" style="left:20px;top:388px;line-height:14px;color:#333">лопата</div><div class="a t11" style="left:160px;top:388px;line-height:14px;color:#333">шт</div><div class="a" style="left:157px;top:388px;width:1px;height:14px;background:#d0c48b"></div><div class="a t11" style="left:191px;top:388px;width:81.5px;text-align:right;line-height:14px;color:#333">1,000</div><div class="a t11" style="left:275px;top:388px;width:93.5px;text-align:right;line-height:14px;color:#333">10,00</div><div class="a" style="left:190px;top:388px;width:1px;height:14px;background:#d0c48b"></div><div class="a" style="left:275px;top:388px;width:1px;height:14px;background:#d0c48b"></div><div class="a" style="left:371px;top:388px;width:1px;height:15px;background:#d0c48b"></div><div class="a" style="left:0;top:402px;width:372px;height:1px;background:#d0c48b"></div><div class="a t11" style="left:20px;top:403px;line-height:14px;color:#333">Питчер для молока</div><div class="a t11" style="left:160px;top:403px;line-height:14px;color:#333">шт</div><div class="a" style="left:157px;top:403px;width:1px;height:14px;background:#d0c48b"></div><div class="a t11" style="left:191px;top:403px;width:81.5px;text-align:right;line-height:14px;color:#333">1,000</div><div class="a t11" style="left:275px;top:403px;width:93.5px;text-align:right;line-height:14px;color:#333">2 666,68</div><div class="a" style="left:190px;top:403px;width:1px;height:14px;background:#d0c48b"></div><div class="a" style="left:275px;top:403px;width:1px;height:14px;background:#d0c48b"></div><div class="a" style="left:371px;top:403px;width:1px;height:15px;background:#d0c48b"></div><div class="a" style="left:0;top:417px;width:372px;height:1px;background:#d0c48b"></div><div class="a t11" style="left:20px;top:418px;line-height:14px;color:#333">Питчер для эспрессо</div><div class="a t11" style="left:160px;top:418px;line-height:14px;color:#333">шт</div><div class="a" style="left:157px;top:418px;width:1px;height:14px;background:#d0c48b"></div><div class="a t11" style="left:191px;top:418px;width:81.5px;text-align:right;line-height:14px;color:#333">2,000</div><div class="a t11" style="left:275px;top:418px;width:93.5px;text-align:right;line-height:14px;color:#333">5 333,32</div><div class="a" style="left:190px;top:418px;width:1px;height:14px;background:#d0c48b"></div><div class="a" style="left:275px;top:418px;width:1px;height:14px;background:#d0c48b"></div><div class="a" style="left:371px;top:418px;width:1px;height:15px;background:#d0c48b"></div><div class="a" style="left:0;top:432px;width:372px;height:1px;background:#d0c48b"></div><div class="a t11" style="left:20px;top:433px;line-height:14px;color:#333">Подключение кофемолки</div><div class="a t11" style="left:160px;top:433px;line-height:14px;color:#333">ч</div><div class="a" style="left:157px;top:433px;width:1px;height:14px;background:#d0c48b"></div><div class="a t11" style="left:191px;top:433px;width:81.5px;text-align:right;line-height:14px;color:#333">2,000</div><div class="a t11" style="left:275px;top:433px;width:93.5px;text-align:right;line-height:14px;color:#333">10 750,00</div><div class="a" style="left:190px;top:433px;width:1px;height:14px;background:#d0c48b"></div><div class="a" style="left:275px;top:433px;width:1px;height:14px;background:#d0c48b"></div><div class="a" style="left:371px;top:433px;width:1px;height:15px;background:#d0c48b"></div><div class="a" style="left:0;top:447px;width:372px;height:1px;background:#d0c48b"></div></div>
<div class="a" style="left:0;top:0;width:36px;height:707px;overflow:hidden"><div class="a" style="left:17px;top:274px;width:1px;height:138px;background:#a0a0a0"></div><div class="a" style="left:17px;top:412px;width:19px;height:1px;background:#a0a0a0"></div><div class="a" style="left:13px;top:266px;width:9px;height:9px;border:1px solid #9a9a9a;border-radius:1px;background:#fff"></div><div class="a" style="left:15px;top:270px;width:5px;height:1px;background:#222"></div><div class="a" style="left:17px;top:424px;width:1px;height:18px;background:#a0a0a0"></div><div class="a" style="left:17px;top:442px;width:19px;height:1px;background:#a0a0a0"></div><div class="a" style="left:13px;top:416px;width:9px;height:9px;border:1px solid #9a9a9a;border-radius:1px;background:#fff"></div><div class="a" style="left:15px;top:420px;width:5px;height:1px;background:#222"></div><div class="a" style="left:17px;top:454px;width:1px;height:33px;background:#a0a0a0"></div><div class="a" style="left:17px;top:487px;width:19px;height:1px;background:#a0a0a0"></div><div class="a" style="left:13px;top:446px;width:9px;height:9px;border:1px solid #9a9a9a;border-radius:1px;background:#fff"></div><div class="a" style="left:15px;top:450px;width:5px;height:1px;background:#222"></div><div class="a" style="left:17px;top:499px;width:1px;height:211px;background:#a0a0a0"></div><div class="a" style="left:17px;top:710px;width:19px;height:1px;background:#a0a0a0"></div><div class="a" style="left:13px;top:491px;width:9px;height:9px;border:1px solid #9a9a9a;border-radius:1px;background:#fff"></div><div class="a" style="left:15px;top:495px;width:5px;height:1px;background:#222"></div></div>
<div class="a" style="left:44px;top:710px;width:851px;height:10px;background:#d4d4d4"></div>
<div class="a" style="left:38px;top:710px;width:769px;height:10px;border-radius:5px;background:#9a9a9a"></div>
<div class="a" style="left:21px;top:713px;width:0;height:0;border-top:2.5px solid transparent;border-bottom:2.5px solid transparent;border-right:5px solid #c0c0c0"></div><div class="a" style="left:459px;top:218px;width:438px;height:221px;background:#fff;border:1px solid #a0a0a0;border-right:none;box-shadow:1px 1px 2px rgba(0,0,0,.08)"></div>
<div class="a t13" style="left:504px;top:227px;color:#424242">Создать рассылку отчетов...</div>
<div class="a t13" style="left:504px;top:257px;color:#424242">Включить в существующую рассылку отчетов...</div>
<div class="a" style="left:461px;top:281px;width:434px;height:1px;background:#dcd7c0"></div>
<div class="a t13" style="left:504px;top:291px;color:#424242">Отправить сейчас...</div>
<div class="a t13" style="left:504px;top:321px;color:#424242">Создать задачи по контрагентам из отчета</div>
<div class="a t13" style="left:504px;top:351px;color:#424242">Добавить в массовую рассылку контрагентов из отчета</div>
<div class="a" style="left:878px;top:353px;width:0;height:0;border-top:5px solid transparent;border-bottom:5px solid transparent;border-left:5px solid #444"></div>
<div class="a" style="left:460px;top:375px;width:436px;height:1px;background:#e0e0e0"></div>
<div class="a" style="left:460px;top:378px;width:436px;height:29px;background:#f9c91f"></div>
<div class="a t13" style="left:504px;top:385px;color:#424242">Добавить в сегмент контрагентов из отчета</div>
<div class="a t13" style="left:504px;top:415px;color:#424242">Добавить в сегмент номенклатуру из отчета</div>
<div class="a" style="left:459px;top:375px;width:433px;height:62px;border:3px solid #d00000"></div>
<svg class="a" style="left:474px;top:224px" width="20" height="20" viewBox="474 224 20 20">
<rect x="476.7" y="226.7" width="10.6" height="12.6" rx="0.8" fill="#fff" stroke="#6f8294" stroke-width="1.1"/>
<rect x="478" y="231" width="2" height="5.3" fill="#2db02d"/><rect x="480.9" y="228" width="2.1" height="8.3" fill="#f03a3a"/>
<circle cx="487.6" cy="237.4" r="4.2" fill="#fff" stroke="#3b6fa5" stroke-width="1.3"/>
<g fill="#e24a3a"><circle cx="487.6" cy="234.6" r="0.6"/><circle cx="487.6" cy="240.2" r="0.6"/><circle cx="484.8" cy="237.4" r="0.6"/><circle cx="490.4" cy="237.4" r="0.6"/></g>
<circle cx="487.8" cy="237.2" r="1.2" fill="#b8cde6"/>
</svg>
<svg class="a" style="left:475px;top:291px" width="18" height="14" viewBox="475 291 18 14">
<defs><linearGradient id="eg1" x1="0" y1="0" x2="0" y2="1"><stop offset="0" stop-color="#fdeeb4"/><stop offset="1" stop-color="#eec05a"/></linearGradient></defs>
<rect x="477.5" y="293.5" width="13.4" height="9.4" rx="1.6" fill="url(#eg1)" stroke="#c98a2a" stroke-width="1"/>
<path d="M479.6 295.4 L484.2 299.2 L488.8 295.4" fill="none" stroke="#cf9a3e" stroke-width="1"/>
<path d="M478.6 302 L482.6 298.4 M489.8 302 L485.8 298.4" fill="none" stroke="#d9a650" stroke-width="0.8"/>
</svg>
<div class="a frame"></div>
</body></html>
